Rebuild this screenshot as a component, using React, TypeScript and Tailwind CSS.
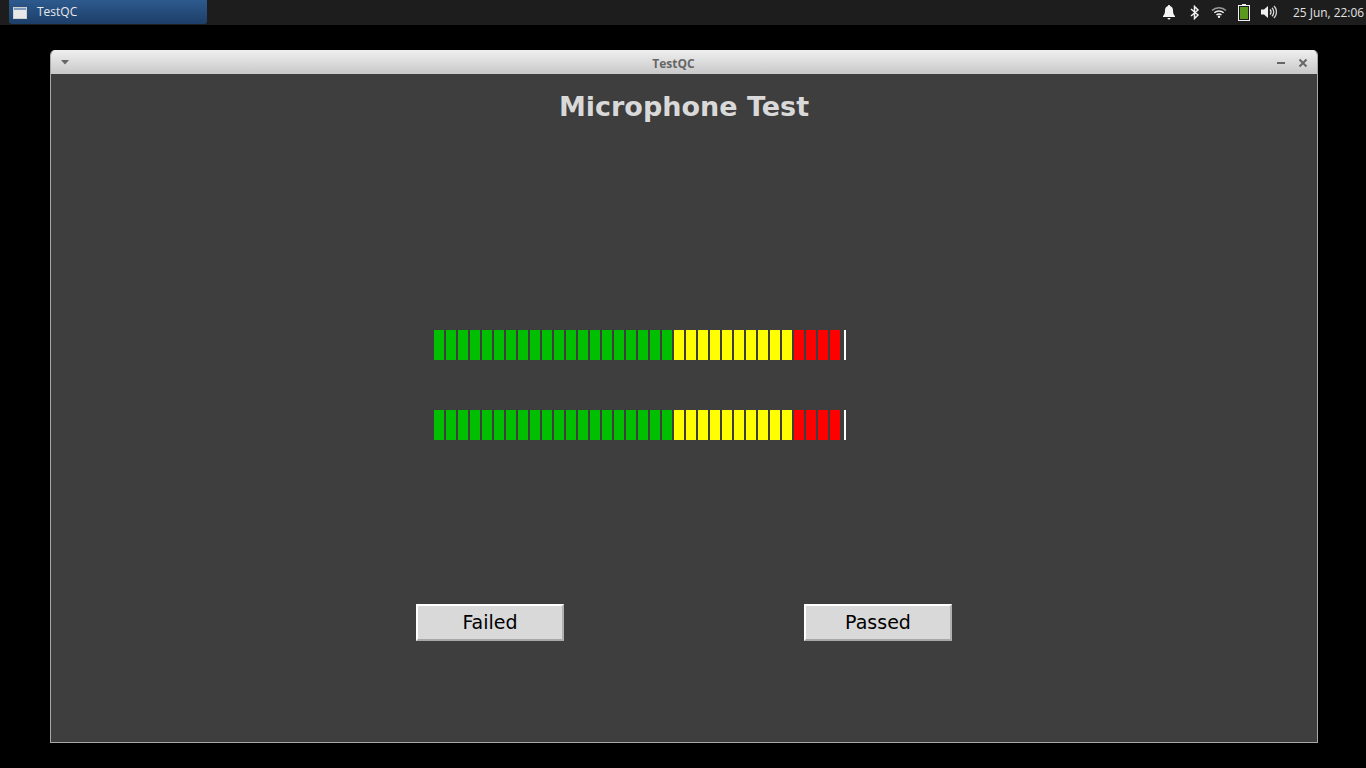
import React from "react";

const green = Array.from({ length: 20 }, (_, i) => i);
const yellow = Array.from({ length: 10 }, (_, i) => i);
const red = Array.from({ length: 4 }, (_, i) => i);

function Meter() {
  return (
    <div className="flex h-[30px] ml-[383px]">
      {green.map((i) => (
        <div key={i} className="w-[10px] mr-[2px] bg-[#00bf00]" />
      ))}
      {yellow.map((i) => (
        <div key={i} className="w-[10px] mr-[2px] bg-[#ffff00]" />
      ))}
      {red.map((i) => (
        <div key={i} className="w-[10px] mr-[2px] bg-[#ff0000]" />
      ))}
      <div className="w-[2px] ml-[2px] bg-white" />
    </div>
  );
}

function Btn({ label }: { label: string }) {
  return (
    <div className="w-[148px] h-[37px] flex items-center justify-center bg-[#d9d9d9] border-2 border-t-white border-l-white border-r-[#b0b0b0] border-b-[#a8a8a8] text-black text-[19px] pb-[1px] font-['DejaVu_Sans',sans-serif]">
      {label}
    </div>
  );
}

export default function App() {
  return (
    <div className="w-[1366px] h-[768px] bg-black overflow-hidden flex flex-col font-['Open_Sans','Noto_Sans',sans-serif]">
      <div className="h-[25px] bg-[#1d1d1d] flex items-center justify-between shrink-0">
        <div className="ml-[9px] w-[198px] h-[24px] -mt-px rounded-b-[3px] bg-gradient-to-b from-[#2d5a8e] to-[#1d3f68] flex items-center text-[#e8e8e8] text-[12px]">
          <svg width="14" height="12" viewBox="0 0 14 12" className="ml-[4px] mt-[1px]">
            <rect x="0.5" y="0.5" width="13" height="11" fill="#e8e8e8" stroke="#d0d0d0" />
            <rect x="1" y="1" width="12" height="2" fill="#7f9cc0" />
          </svg>
          <span className="ml-[10px]">TestQC</span>
        </div>
        <div className="flex items-center text-[#e4e4e4] text-[11.9px]">
          <svg width="14" height="16" viewBox="0 0 14 16" className="mr-[14px]">
            <path d="M7 1c.7 0 1.1.5 1.1 1.1C10.300 2.700 11 4.500 11 6.500c0 2.800.6 4 2 5.500v1H1v-1c1.400-1.500 2-2.700 2-5.500 0-2 .7-3.800 2.900-4.400C5.900 1.500 6.300 1 7 1z" fill="#f4f4f4" />
            <path d="M5.500 14h3a1.500 1.500 0 0 1-3 0z" fill="#f4f4f4" />
          </svg>
          <svg width="10" height="15" viewBox="0 0 10 15" className="mr-[11px]">
            <path d="M1 4l7 6-3.500 3.500v-12L8 5l-7 6" fill="none" stroke="#f0f0f0" strokeWidth="1.500" />
          </svg>
          <svg width="16" height="12" viewBox="0 0 16 12" className="mr-[11px]">
            <path d="M1 4.500a10 10 0 0 1 14 0" fill="none" stroke="#9a9a9a" strokeWidth="1.500" />
            <path d="M3.300 6.800a7 7 0 0 1 9.400 0" fill="none" stroke="#e8e8e8" strokeWidth="1.500" />
            <path d="M5.500 9a4 4 0 0 1 5 0" fill="none" stroke="#f4f4f4" strokeWidth="1.500" />
            <circle cx="8" cy="10.800" r="1.200" fill="#f4f4f4" />
          </svg>
          <svg width="12" height="17" viewBox="0 0 12 17" className="mr-[11px]">
            <rect x="4" y="0" width="4" height="2" fill="#f0f0f0" />
            <rect x="0.500" y="1.500" width="11" height="15" fill="#1d1d1d" stroke="#f0f0f0" />
            <rect x="2" y="3" width="8" height="12" fill="#5b9a1f" />
          </svg>
          <svg width="16" height="14" viewBox="0 0 16 14" className="mr-[16px]">
            <path d="M0 4.500h3L7 1v12L3 9.500H0z" fill="#f0f0f0" />
            <path d="M9 4.500a3.500 3.500 0 0 1 0 5" fill="none" stroke="#e8e8e8" strokeWidth="1.300" />
            <path d="M11 2.800a6 6 0 0 1 0 8.400" fill="none" stroke="#d8d8d8" strokeWidth="1.300" />
            <path d="M13 1a8.500 8.500 0 0 1 0 12" fill="none" stroke="#d0d0d0" strokeWidth="1.300" />
          </svg>
          <span className="mr-[2px] whitespace-nowrap">25 Jun, 22:06</span>
        </div>
      </div>

      <div className="ml-[50px] mt-[25px] w-[1268px] h-[693px] flex flex-col border border-t-0 border-[#a8a8a8] rounded-t-[5px] overflow-hidden">
        <div className="h-[24px] shrink-0 bg-gradient-to-b from-[#f0f0f0] to-[#c8c8c8] flex items-center justify-between text-[#666666]">
          <svg width="10" height="6" viewBox="0 0 10 6" className="ml-[9px]">
            <path d="M1 1h8L5 5.500z" fill="#666666" />
          </svg>
          <span className="text-[12px] font-bold font-['Open_Sans',sans-serif] ml-[1px] mt-[4px]">TestQC</span>
          <div className="flex items-center mr-[9px] mt-[1px]">
            <svg width="10" height="10" viewBox="0 0 10 10" className="mr-[12px]">
              <rect x="1" y="4" width="8" height="2" fill="#666666" />
            </svg>
            <svg width="10" height="10" viewBox="0 0 10 10">
              <path d="M1.500 1.500l7 7M8.500 1.500l-7 7" stroke="#666666" strokeWidth="2" />
            </svg>
          </div>
        </div>
        <div className="flex-1 bg-[#3e3e3e] flex flex-col">
          <h1 className="mt-[14px] h-[37px] leading-[37px] text-center text-[27px] font-bold text-[#d9d9d9] font-['DejaVu_Sans',sans-serif]">
            Microphone Test
          </h1>
          <div className="mt-[205px]">
            <Meter />
          </div>
          <div className="mt-[50px]">
            <Meter />
          </div>
          <div className="mt-[164px] ml-[365px] flex gap-[240px]">
            <Btn label="Failed" />
            <Btn label="Passed" />
          </div>
        </div>
      </div>
    </div>
  );
}
